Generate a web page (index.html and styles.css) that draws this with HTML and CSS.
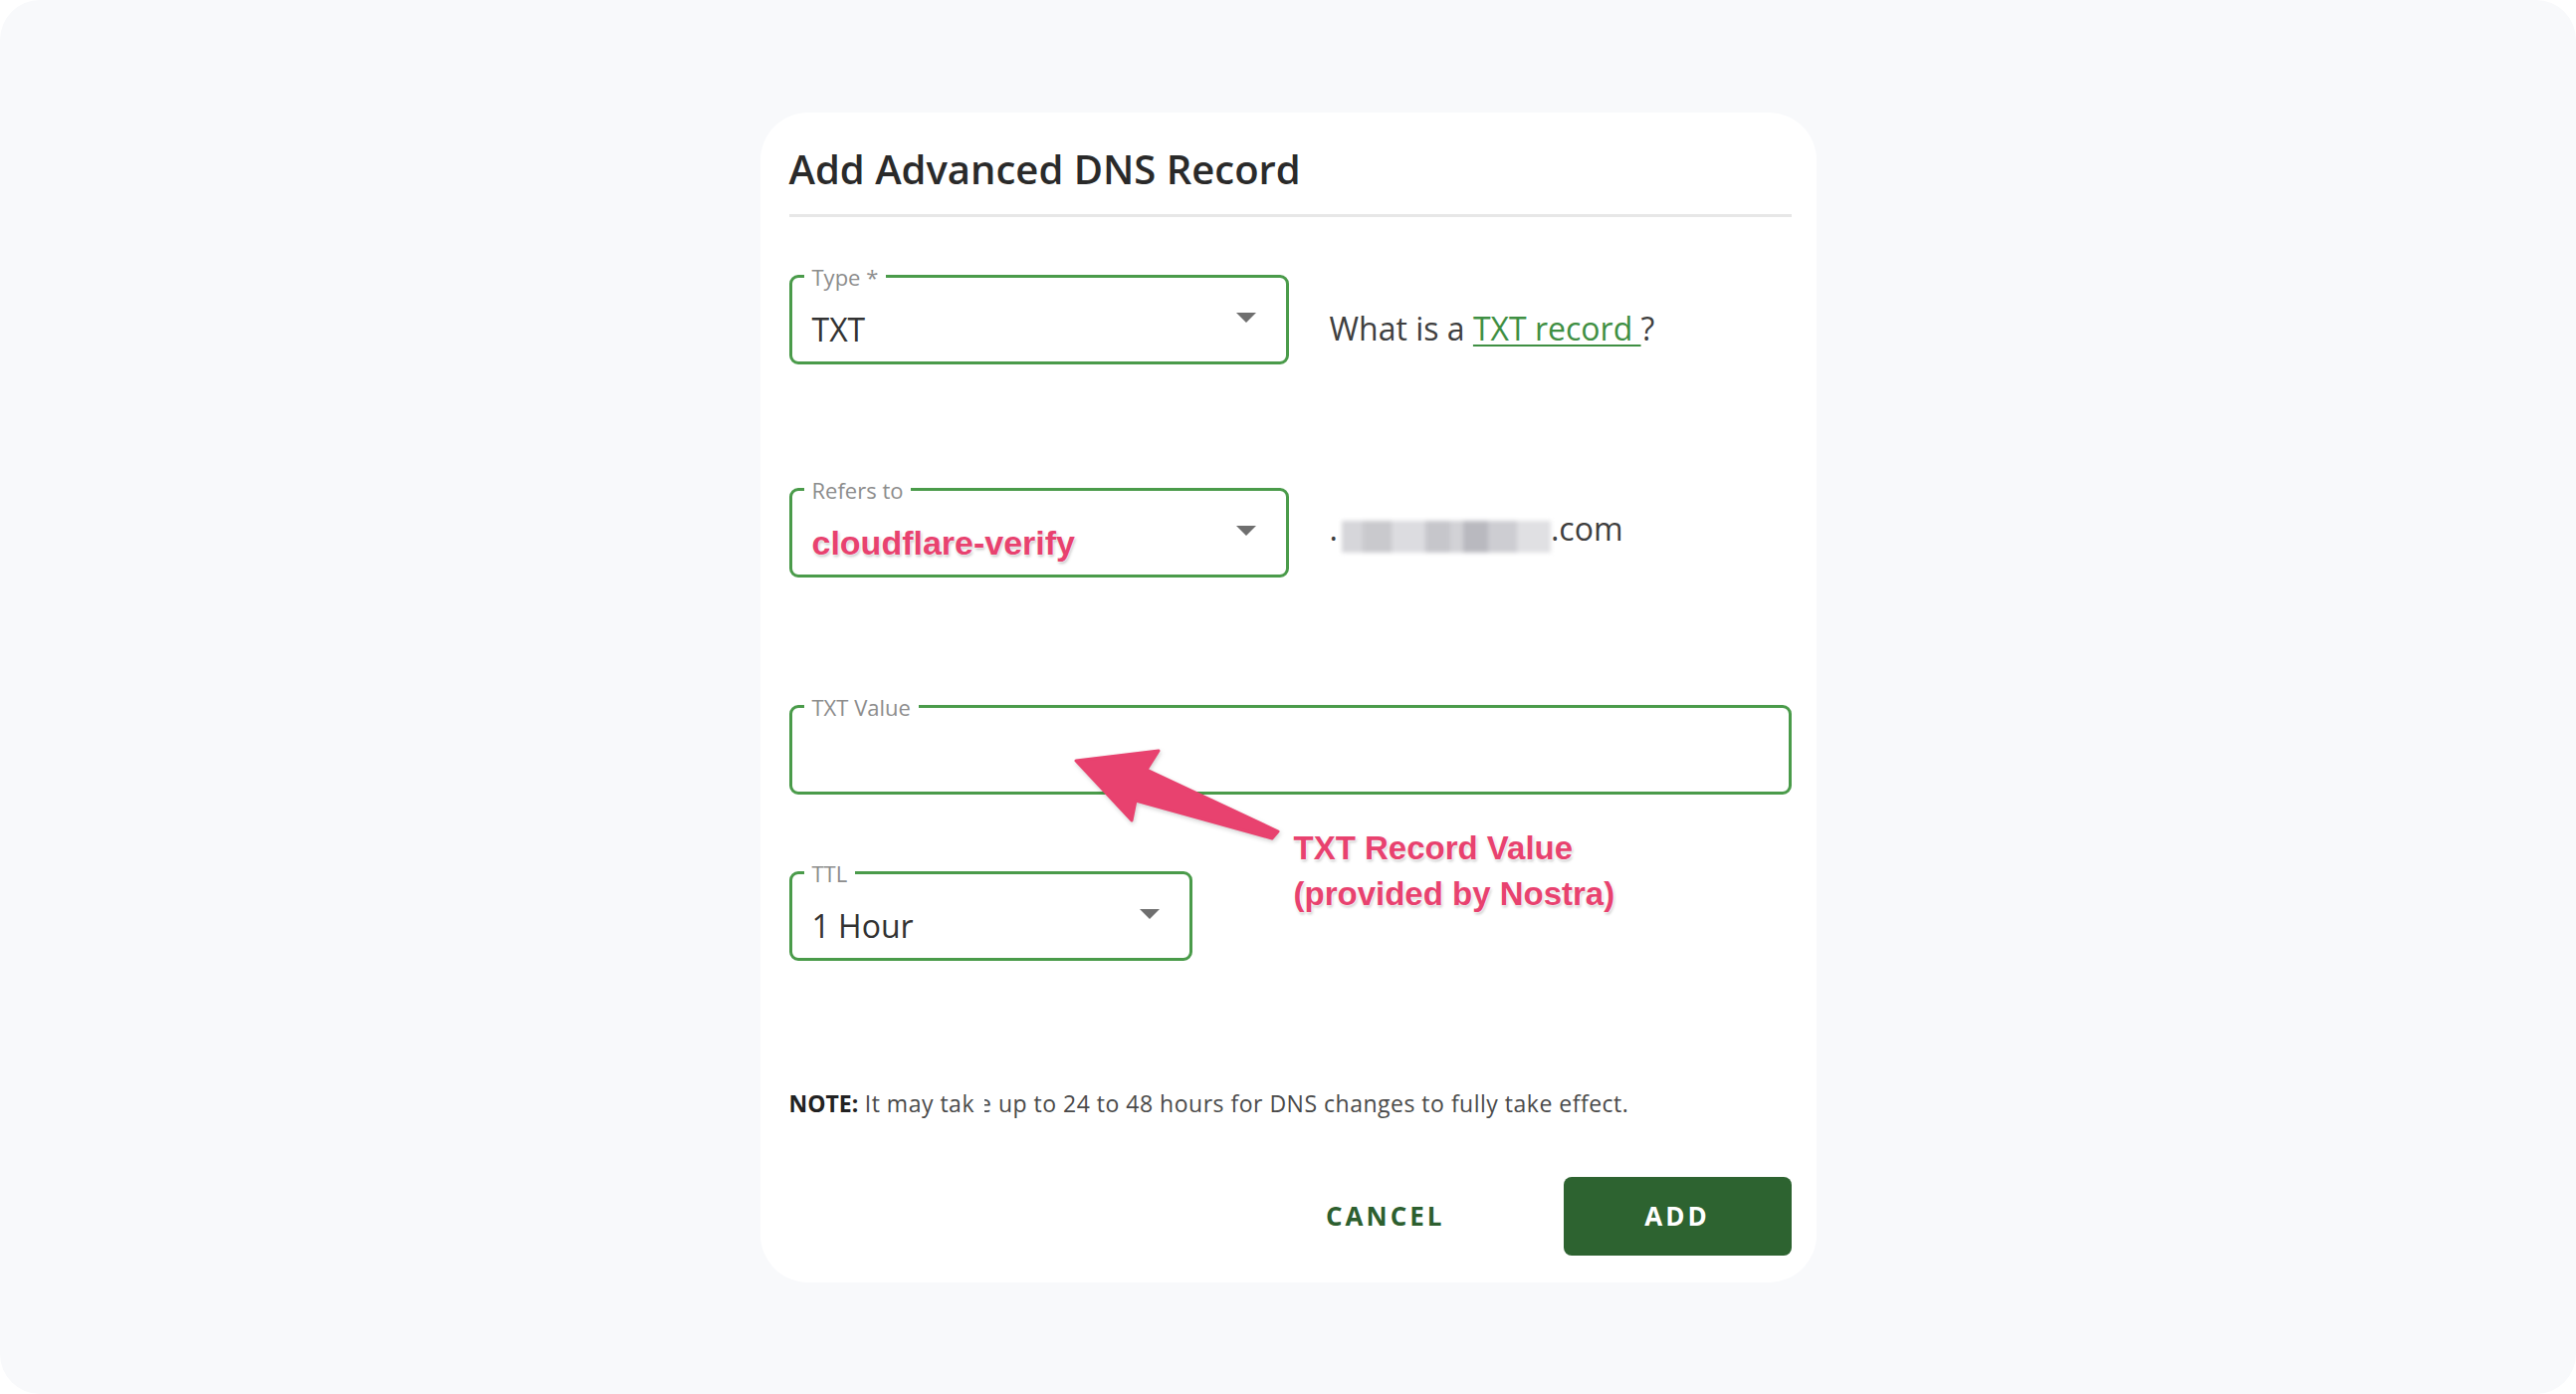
FILE: index.html
```html
<!DOCTYPE html>
<html lang="en">
<head>
<meta charset="utf-8">
<title>Add Advanced DNS Record</title>
<link rel="stylesheet" href="styles.css">
</head>
<body>
<div class="page">
  <div class="card">
    <h1 class="title">Add Advanced DNS Record</h1>
    <div class="divider"></div>

    <div class="row row-type">
      <div class="field field-type">
        <span class="label">Type *</span>
        <span class="value">TXT</span>
        <span class="caret"></span>
      </div>
      <div class="help">What is a <a class="link" href="#">TXT record </a>?</div>
    </div>

    <div class="row row-refers">
      <div class="field field-type">
        <span class="label">Refers to</span>
        <span class="value value-pink">cloudflare-verify</span>
        <span class="caret"></span>
      </div>
      <div class="domain">.<span class="blur"></span>.com</div>
    </div>

    <div class="row row-txt">
      <div class="field field-wide">
        <span class="label">TXT Value</span>
        <span class="value"></span>
      </div>
    </div>

    <div class="row row-ttl">
      <div class="field field-ttl">
        <span class="label">TTL</span>
        <span class="value">1 Hour</span>
        <span class="caret"></span>
      </div>
    </div>

    <p class="note"><b>NOTE:</b> It may tak<span class="glitch">e</span> up to 24 to 48 hours for DNS changes to fully take effect.</p>

    <div class="actions">
      <button class="btn btn-cancel">CANCEL</button>
      <button class="btn btn-add">ADD</button>
    </div>

    <svg class="arrow" width="1061" height="1175" viewBox="0 0 1061 1175" aria-hidden="true">
      <polygon points="317,651 400,641 388,660 520,722 514,729 377,691 373,711" fill="#e8426f" stroke="#e8426f" stroke-width="3" stroke-linejoin="round"/>
    </svg>
    <div class="annotation">TXT Record Value<br>(provided by Nostra)</div>
  </div>
</div>
</body>
</html>
```

FILE: styles.css
```css
html {
  background: #ffffff;
}
body {
  margin: 0;
  font-family: "Open Sans", "Noto Sans", sans-serif;
}
.page {
  width: 2588px;
  height: 1400px;
  background: #f8f9fb;
  border-radius: 40px;
  display: flex;
  align-items: center;
  justify-content: center;
}
.card {
  position: relative;
  box-sizing: border-box;
  width: 1061px;
  height: 1175px;
  background: #ffffff;
  border-radius: 48px;
  padding: 33px 25px 25px 29px;
  display: flex;
  flex-direction: column;
}
.title {
  margin: 0;
  font-size: 40px;
  line-height: 48px;
  font-weight: 600;
  color: #2a2a2a;
}
.divider {
  margin-top: 21px;
  height: 3px;
  background: #e7e7e7;
}
.row {
  display: flex;
  align-items: flex-start;
}
.row-type { margin-top: 58px; }
.row-refers { margin-top: 124px; }
.row-txt { margin-top: 128px; }
.row-ttl { margin-top: 77px; }

.field {
  position: relative;
  box-sizing: border-box;
  height: 90px;
  border: 3.5px solid #4a9b4a;
  border-radius: 9px;
  display: flex;
  align-items: center;
  padding: 0 30px 0 20px;
}
.field-type { width: 502px; }
.field-wide { width: 1007px; }
.field-ttl { width: 405px; }
.label {
  position: absolute;
  top: -14px;
  left: 12px;
  padding: 0 8px;
  background: #ffffff;
  font-size: 22px;
  line-height: 26px;
  color: #8d8d8d;
}
.value {
  flex: 1;
  padding-top: 20px;
  font-size: 32px;
  line-height: 40px;
  color: #333333;
}
.value-pink {
  font-family: "Liberation Sans", Arial, sans-serif;
  font-weight: 700;
  font-size: 34px;
  color: #e8426f;
  text-shadow: 0 0 2px #fff, 0 0 2px #fff, 1px 2px 3px rgba(0,0,0,0.25);
}
.caret {
  width: 0;
  height: 0;
  border-left: 10px solid transparent;
  border-right: 10px solid transparent;
  border-top: 10px solid #6f6f6f;
  margin-bottom: 4px;
}
.help {
  margin-left: 41px;
  margin-top: 34px;
  font-size: 32px;
  line-height: 40px;
  color: #3f3f3f;
}
.link {
  color: #3f8f43;
  text-decoration: underline;
  text-decoration-thickness: 2px;
  text-underline-offset: 4px;
}
.domain {
  margin-left: 41px;
  margin-top: 21px;
  font-size: 32px;
  line-height: 40px;
  color: #3f3f3f;
}
.blur {
  display: inline-block;
  width: 210px;
  height: 32px;
  vertical-align: -12px;
  margin-left: 4px;
  background: linear-gradient(90deg, #d6d6da 0 10%, #c9c9cd 10% 24%, #dcdce0 24% 40%, #c6c6cb 40% 52%, #d2d2d6 52% 58%, #b9b9bf 58% 70%, #cdcdd2 70% 84%, #e0e0e3 84%);
  filter: blur(2px);
}
.note {
  margin: 128px 0 0 0;
  font-size: 23px;
  line-height: 30px;
  letter-spacing: 0.5px;
  color: #4a4a4a;
}
.note b {
  color: #222222;
  font-weight: 700;
  letter-spacing: 0;
}
.glitch {
  display: inline-block;
  margin-left: 4px;
  clip-path: inset(0 0 0 45%);
}
.actions {
  margin-top: 59px;
  display: flex;
  justify-content: flex-end;
  align-items: center;
}
.btn {
  font-family: "Open Sans", "Noto Sans", sans-serif;
  font-size: 26px;
  font-weight: 700;
  letter-spacing: 3px;
  border: none;
  cursor: pointer;
}
.btn-cancel {
  background: transparent;
  color: #2d5f2f;
  padding: 0 56px;
  margin-right: 63px;
  height: 79px;
}
.btn-add {
  width: 229px;
  height: 79px;
  border-radius: 8px;
  background: #2d6330;
  color: #ffffff;
}
.arrow {
  position: absolute;
  left: 0;
  top: 0;
  pointer-events: none;
  filter: drop-shadow(1px 2px 2px rgba(0,0,0,0.18));
}
.annotation {
  position: absolute;
  left: 536px;
  top: 716px;
  font-family: "Liberation Sans", Arial, sans-serif;
  font-weight: 700;
  font-size: 33px;
  line-height: 46px;
  color: #e8426f;
  text-shadow: 0 0 2px #fff, 0 0 2px #fff, 0 0 3px #fff, 1px 2px 3px rgba(0,0,0,0.25);
}
```
